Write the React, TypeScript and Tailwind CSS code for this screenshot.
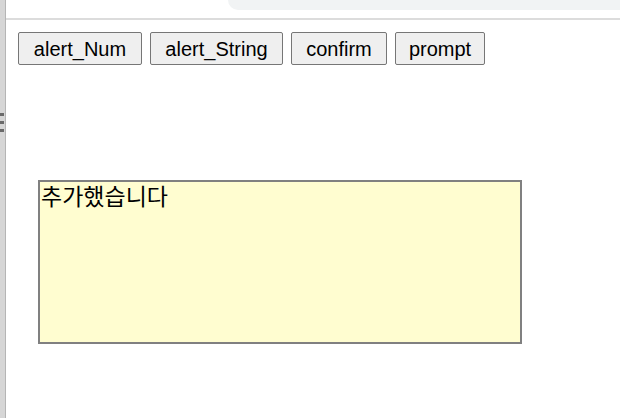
export default function App() {
  const buttons = [
    { label: "alert_Num", w: "w-[124px]" },
    { label: "alert_String", w: "w-[133px]" },
    { label: "confirm", w: "w-[96px]" },
    { label: "prompt", w: "w-[90px]" },
  ];

  return (
    <div className="flex h-[418px] w-[620px] overflow-hidden bg-white font-['Liberation_Sans','Noto_Sans_CJK_KR',sans-serif]">
      {/* left resize strip */}
      <div className="relative h-full w-[6px] shrink-0 border-r border-[#b5b5b5] bg-[#d6d6d6]">
        <div className="absolute left-0 top-[113px] flex flex-col gap-[5px]">
          <div className="h-[3px] w-[4px] bg-[#6a6a6a]" />
          <div className="h-[3px] w-[4px] bg-[#6a6a6a]" />
          <div className="h-[3px] w-[4px] bg-[#6a6a6a]" />
        </div>
      </div>

      <div className="flex flex-1 flex-col">
        {/* top browser chrome */}
        <div className="flex h-[18px] justify-end">
          <div className="h-[10px] w-[392px] rounded-bl-[12px] bg-[#f1f3f4]" />
        </div>
        <div className="h-[2px] bg-[#dcdcdc]" />

        {/* buttons */}
        <div className="mt-[12px] flex gap-[8px] pl-[12px]">
          {buttons.map((b) => (
            <button
              key={b.label}
              className={`${b.w} h-[33px] rounded-[2px] border border-[#767676] bg-[#efefef] text-[20px] leading-none text-black`}
            >
              {b.label}
            </button>
          ))}
        </div>

        {/* textarea */}
        <div className="ml-[32px] mt-[115px] h-[164px] w-[484px] border-2 border-[#808080] bg-[#fffdd0] px-[1px] text-[23px] leading-[30px] text-black">
          추가했습니다
        </div>
      </div>
    </div>
  );
}
